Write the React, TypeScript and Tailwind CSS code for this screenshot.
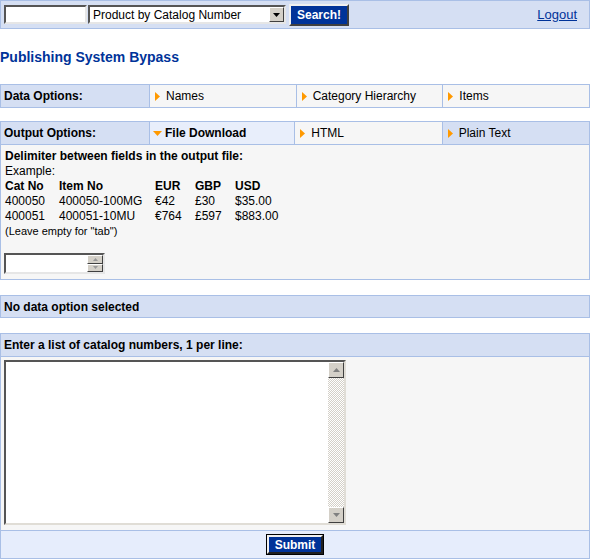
const font = { fontFamily: '"Liberation Sans", Arial, sans-serif' };

const RightArrow = () => (
  <svg width="5" height="9" viewBox="0 0 5 9" className="shrink-0">
    <path d="M0 0 L5 4.5 L0 9 Z" fill="#ff9900" />
  </svg>
);

const DownArrow = () => (
  <svg width="9" height="5" viewBox="0 0 9 5" className="shrink-0">
    <path d="M0 0 L9 0 L4.5 5 Z" fill="#ff9900" />
  </svg>
);

const OptionCell = ({
  label,
  selected,
  bg = 'bg-[#f6f6f6]',
}: {
  label: string;
  selected?: boolean;
  bg?: string;
}) => (
  <div
    className={`flex items-center border-l border-[#a9bfe6] flex-1 ${
      selected ? 'bg-[#e8eefb] font-bold pl-[3px] gap-[3px]' : `${bg} pl-[5px] gap-[6px]`
    }`}
  >
    {selected ? <DownArrow /> : <RightArrow />}
    <span className="text-[12px]">{label}</span>
  </div>
);

const Spinner = () => (
  <div className="flex h-[21px] w-[101px] border-2 border-t-[#555] border-l-[#555] border-b-[#e6e6e6] border-r-[#e6e6e6] bg-white ml-[4px]">
    <div className="flex-1" />
    <div className="flex flex-col w-[16px]">
      <div className="flex-1 bg-[#d4d0c8] border border-t-white border-l-white border-b-[#404040] border-r-[#404040] flex items-center justify-center">
        <svg width="5" height="3" viewBox="0 0 5 3"><path d="M0 3 L5 3 L2.5 0 Z" fill="#999" /></svg>
      </div>
      <div className="flex-1 bg-[#d4d0c8] border border-t-white border-l-white border-b-[#404040] border-r-[#404040] flex items-center justify-center">
        <svg width="5" height="3" viewBox="0 0 5 3"><path d="M0 0 L5 0 L2.5 3 Z" fill="#999" /></svg>
      </div>
    </div>
  </div>
);

export default function App() {
  return (
    <div className="w-[590px] h-[559px] bg-white text-black overflow-hidden" style={font}>
      {/* top search bar */}
      <div className="h-[29px] flex items-center border border-[#a9bfe6] bg-[#d5dff3] pl-[3px] pr-[12px]">
        <div className="h-[19px] w-[83px] bg-white border-2 border-t-[#555] border-l-[#555] border-b-[#e6e6e6] border-r-[#e6e6e6]" />
        <div className="ml-[1px] h-[19px] w-[198px] bg-white border-2 border-t-[#555] border-l-[#555] border-b-[#e6e6e6] border-r-[#e6e6e6] flex items-center">
          <span className="flex-1 pl-[3px] text-[12px] leading-none">Product by Catalog Number</span>
          <div className="w-[15px] h-[15px] bg-[#d4d0c8] border border-t-white border-l-white border-b-[#404040] border-r-[#404040] flex items-center justify-center">
            <svg width="7" height="4" viewBox="0 0 7 4"><path d="M0 0 L7 0 L3.5 4 Z" fill="#000" /></svg>
          </div>
        </div>
        <button className="ml-[3px] h-[22px] w-[60px] bg-[#003399] text-white font-bold text-[12px] border-2 border-t-[#f0f0f0] border-l-[#f0f0f0] border-b-[#404040] border-r-[#404040] leading-none">
          Search!
        </button>
        <div className="flex-1" />
        <a href="#" className="text-[13px] text-[#003399] underline">Logout</a>
      </div>

      {/* title */}
      <div className="mt-[20px] h-4 text-[14px] font-bold text-[#003399] leading-4">
        Publishing System Bypass
      </div>

      {/* data options */}
      <div className="mt-[19px] h-[24px] flex border border-[#a9bfe6]">
        <div className="w-[148px] shrink-0 bg-[#d5dff3] flex items-center pl-[3px] text-[12px] font-bold">
          Data Options:
        </div>
        <OptionCell label="Names" />
        <OptionCell label="Category Hierarchy" />
        <OptionCell label="Items" />
      </div>

      {/* output options */}
      <div className="mt-[13px] border border-[#a9bfe6]">
        <div className="h-[23px] flex border-b border-[#a9bfe6]">
          <div className="w-[148px] shrink-0 bg-[#d5dff3] flex items-center pl-[3px] text-[12px] font-bold">
            Output Options:
          </div>
          <OptionCell label="File Download" selected />
          <OptionCell label="HTML" />
          <OptionCell label="Plain Text" bg="bg-[#d5dff3]" />
        </div>
        <div className="h-[134px] bg-[#f6f6f6] pt-[4px]">
          <div className="pl-[4px] text-[12px] font-bold leading-[15px]">Delimiter between fields in the output file:</div>
          <div className="pl-[4px] text-[12px] leading-[15px]">Example:</div>
          <div className="pl-[4px] text-[12px] leading-[15px] grid grid-cols-[54px_96px_40px_40px_60px]">
            <span className="font-bold">Cat No</span>
            <span className="font-bold">Item No</span>
            <span className="font-bold">EUR</span>
            <span className="font-bold">GBP</span>
            <span className="font-bold">USD</span>
            <span>400050</span>
            <span>400050-100MG</span>
            <span>€42</span>
            <span>£30</span>
            <span>$35.00</span>
            <span>400051</span>
            <span>400051-10MU</span>
            <span>€764</span>
            <span>£597</span>
            <span>$883.00</span>
          </div>
          <div className="pl-[4px] text-[11px] leading-[15px]">(Leave empty for "tab")</div>
          <div className="mt-[14px] -ml-[1px]">
            <Spinner />
          </div>
        </div>
      </div>

      {/* no data */}
      <div className="mt-[15px] h-[23px] bg-[#d5dff3] border border-[#a9bfe6] flex items-center pl-[3px] text-[12px] font-bold">
        No data option selected
      </div>

      {/* catalog numbers */}
      <div className="mt-[15px] border border-[#a9bfe6]">
        <div className="h-[23px] bg-[#d5dff3] border-b border-[#a9bfe6] flex items-center pl-[3px] text-[12px] font-bold">
          Enter a list of catalog numbers, 1 per line:
        </div>
        <div className="h-[173px] bg-[#f6f6f6] pt-[3px] pl-[3px]">
          <div className="w-[342px] h-[165px] flex bg-white border-2 border-t-[#555] border-l-[#555] border-b-[#e0ddd6] border-r-[#e0ddd6]">
            <div className="flex-1" />
            <div
              className="w-[16px] flex flex-col justify-between"
              style={{ background: 'repeating-conic-gradient(#d4d0c8 0% 25%, #ffffff 0% 50%) 0 0 / 2px 2px' }}
            >
              <div className="h-[16px] bg-[#d4d0c8] border border-t-white border-l-white border-b-[#404040] border-r-[#404040] flex items-center justify-center">
                <svg width="7" height="4" viewBox="0 0 7 4"><path d="M0 4 L7 4 L3.5 0 Z" fill="#808080" /></svg>
              </div>
              <div className="h-[16px] bg-[#d4d0c8] border border-t-white border-l-white border-b-[#404040] border-r-[#404040] flex items-center justify-center">
                <svg width="7" height="4" viewBox="0 0 7 4"><path d="M0 0 L7 0 L3.5 4 Z" fill="#808080" /></svg>
              </div>
            </div>
          </div>
        </div>
        <div className="h-[28px] bg-[#e6edfc] border-t border-[#a9bfe6] flex items-center justify-center">
          <button className="h-[19px] w-[56px] bg-[#003399] text-white font-bold text-[12px] border-2 border-t-[#f0f0f0] border-l-[#f0f0f0] border-b-[#202020] border-r-[#202020] outline outline-1 outline-black leading-none">
            Submit
          </button>
        </div>
      </div>
    </div>
  );
}
